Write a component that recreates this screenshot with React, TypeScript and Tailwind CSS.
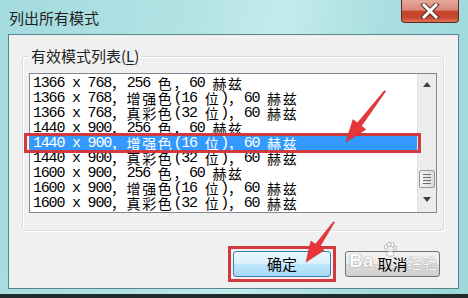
import React from 'react';

const modes = [
  '1366 x 768，256 色，60 赫兹',
  '1366 x 768，增强色(16 位)，60 赫兹',
  '1366 x 768，真彩色(32 位)，60 赫兹',
  '1440 x 900，256 色，60 赫兹',
  '1440 x 900，增强色(16 位)，60 赫兹',
  '1440 x 900，真彩色(32 位)，60 赫兹',
  '1600 x 900，256 色，60 赫兹',
  '1600 x 900，增强色(16 位)，60 赫兹',
  '1600 x 900，真彩色(32 位)，60 赫兹',
];

const selectedIndex = 4;

// 半角と全角を分けて、等幅っぽく並べる
const splitRuns = (s: string) => s.match(/[\x00-\x7f]+|[^\x00-\x7f]+/g) ?? [];

const ModeText = ({ text }: { text: string }) => (
  <>
    {splitRuns(text).map((run, i) =>
      /^[\x00-\x7f]/.test(run) ? (
        <span key={i} className="font-['Liberation_Mono',monospace] text-[15px] tracking-[-1.2px]">
          {run}
        </span>
      ) : (
        <span key={i} className="font-['Noto_Sans_CJK_SC',sans-serif] text-[14px] tracking-[1.6px]">
          {run}
        </span>
      )
    )}
  </>
);

const ScrollBar = () => (
  <div className="w-[19px] flex flex-col bg-[#ececec] border-l border-[#e2e2e2]">
    <div className="h-[20px] flex items-center justify-center">
      <svg width="8" height="5" viewBox="0 0 8 5">
        <path d="M0 5 L4 0 L8 5 Z" fill="#404040" />
      </svg>
    </div>
    <div className="flex-1 flex flex-col justify-end items-center">
      <div className="mb-[2px] w-[16px] h-[18px] rounded-[2px] border border-[#979797] bg-gradient-to-r from-[#f5f5f5] to-[#dadada] flex flex-col items-center justify-center gap-[2px]">
        <div className="w-[8px] h-px bg-[#6e6e6e]" />
        <div className="w-[8px] h-px bg-[#6e6e6e]" />
        <div className="w-[8px] h-px bg-[#6e6e6e]" />
        <div className="w-[8px] h-px bg-[#6e6e6e]" />
      </div>
    </div>
    <div className="h-[22px] flex justify-center pt-[7px]">
      <svg width="8" height="5" viewBox="0 0 8 5">
        <path d="M0 0 L8 0 L4 5 Z" fill="#404040" />
      </svg>
    </div>
  </div>
);

const Arrows = () => (
  <svg className="absolute inset-0 pointer-events-none" width="468" height="298" viewBox="0 0 468 298">
    <polygon
      points="385.5,91.4 361.4,126 365.8,129.4 346,142 353,119.6 357.4,123 384.5,90.6"
      fill="#e8353a"
      stroke="#d0262b"
      strokeWidth="0.6"
    />
    <polygon
      points="334.5,222.3 319.6,247 324.1,250.2 306,262 310.9,241 315.5,244.2 333.5,221.7"
      fill="#e8353a"
      stroke="#d0262b"
      strokeWidth="0.6"
    />
  </svg>
);

const Watermark = () => (
  <>
    <div className="absolute left-[349px] top-[250px] text-[19px] font-bold leading-[22px] text-white font-['Liberation_Sans',sans-serif] [text-shadow:0_0_1px_#7a7a7a,0_0_1px_#7a7a7a] opacity-90">
      Ba
    </div>
    <svg className="absolute left-[383px] top-[242px] opacity-90" width="14" height="16" viewBox="0 0 14 16">
      <g fill="#ffffff" stroke="#9a9a9a" strokeWidth="0.7">
        <ellipse cx="3" cy="5" rx="1.8" ry="2.2" />
        <ellipse cx="6" cy="2.5" rx="1.8" ry="2.2" />
        <ellipse cx="9.5" cy="2.8" rx="1.8" ry="2.2" />
        <ellipse cx="12" cy="6" rx="1.6" ry="2" />
        <path d="M3.5 12 C4 8 10 8 11 12 C11.5 15 3 15 3.5 12 Z" />
      </g>
    </svg>
    <div className="absolute left-[407px] top-[253px] text-[15px] leading-[20px] text-white font-['Noto_Sans_CJK_SC',sans-serif] [text-shadow:0_0_1px_#8a8a8a,0_0_1px_#8a8a8a] opacity-90">
      经验
    </div>
  </>
);

export default function App() {
  return (
    <div className="relative w-[468px] h-[298px] overflow-hidden flex flex-col bg-[linear-gradient(100deg,#a4dbde_0%,#b2e2e4_35%,#c4ebec_55%,#a9dee0_75%,#9dd8db_100%)] font-['Noto_Sans_CJK_SC',sans-serif] text-[#1a1a1a]">
      {/* タイトルバー */}
      <div className="h-[34px] flex items-start justify-between">
        <div className="pl-[9px] pt-[8px] text-[15px] leading-[20px] text-[#1e1e1e]">列出所有模式</div>
        <div className="mr-[9px] w-[58px] h-[23px] rounded-b-[4px] border border-t-0 border-[#5b2a22] bg-[linear-gradient(to_bottom,#e6a99c_0%,#d98a7b_45%,#c4442d_52%,#c9472f_80%,#dd7656_100%)] flex items-center justify-center">
          <svg width="20" height="16" viewBox="0 0 20 16">
            <path d="M4 2 L16 14 M16 2 L4 14" stroke="#5a2a22" strokeWidth="5" strokeLinecap="square" />
            <path d="M4 2 L16 14 M16 2 L4 14" stroke="#ffffff" strokeWidth="3" strokeLinecap="square" />
          </svg>
        </div>
      </div>

      {/* クライアント領域 */}
      <div className="ml-[8px] w-[451px] h-[255px] border border-[#55868b] bg-[#f0f0f0] flex flex-col">
        <fieldset className="ml-[13px] mt-[12px] w-[422px] h-[184px] border border-[#d5dfe5] rounded-[3px] shadow-[inset_1px_1px_0_#ffffff,1px_1px_0_#ffffff]">
          <legend className="ml-[6px] px-[2px] text-[15px] leading-[18px] text-[#222]">
            有效模式列表(<span className="underline underline-offset-2">L</span>)
          </legend>
          <div className="ml-[6px] mt-[8px] w-[408px] h-[140px] border border-[#828790] bg-white flex">
            <div className="flex-1 pt-[2px]">
              {modes.map((m, i) => (
                <div
                  key={m}
                  className={`h-[15px] leading-[15px] pl-[3px] whitespace-pre flex items-center ${
                    i === selectedIndex ? 'bg-[#3399ff] text-white' : 'text-black'
                  }`}
                >
                  <ModeText text={m} />
                </div>
              ))}
            </div>
            <ScrollBar />
          </div>
        </fieldset>

        <div className="mt-[15px] pr-[18px] flex justify-end items-center gap-[9px]">
          <div className="border-[3px] border-[#d0393d] p-[2px]">
            <button className="w-[98px] h-[26px] rounded-[3px] border border-[#3c7fb1] bg-[linear-gradient(to_bottom,#eaf6fd_0%,#d9f0fc_50%,#bee6fd_51%,#a7d9f5_100%)] text-[15px] leading-[20px] text-black">
              确定
            </button>
          </div>
          <button className="w-[95px] h-[26px] rounded-[3px] border border-[#707070] bg-[linear-gradient(to_bottom,#f2f2f2_0%,#ebebeb_50%,#dddddd_51%,#cfcfcf_100%)] text-[15px] leading-[20px] text-black">
            取消
          </button>
        </div>
      </div>

      <div className="h-[5px]" />
      <div className="flex-1 bg-[#1f2b2c]" />

      {/* 注釈の赤枠と矢印 */}
      <div className="absolute left-[24px] top-[133px] w-[397px] h-[20px] border-[3px] border-[#d0393d]" />
      <Arrows />
      <Watermark />
    </div>
  );
}
